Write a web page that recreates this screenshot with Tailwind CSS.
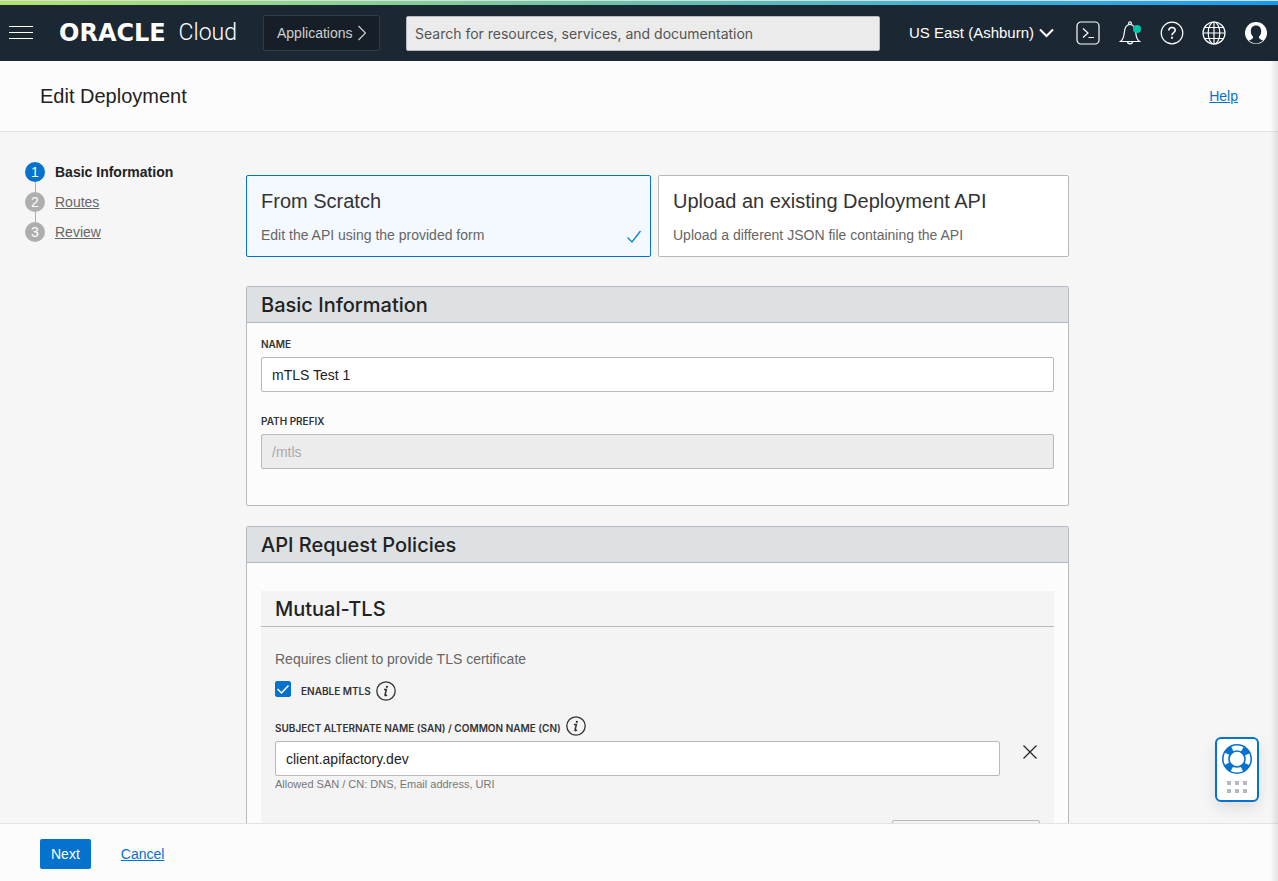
<!DOCTYPE html>
<html lang="en">
<head>
  <meta charset="UTF-8" />
  <meta name="viewport" content="width=device-width, initial-scale=1.0"/>
  <title>Edit Deployment</title>
  <script src="https://cdn.jsdelivr.net/npm/@tailwindcss/browser@4"></script>
</head>
<body class="relative flex flex-col h-screen overflow-hidden bg-[#f6f6f6] font-['Liberation_Sans',Arial,sans-serif] text-sm text-[#222]">

  <!-- Top bar -->
  <div class="h-[5px] shrink-0 border-t border-[#dcdcdc] bg-linear-to-r from-[#b0e566] via-[#66c2ac] to-[#0d9bf5]"></div>
  <header class="flex items-center h-14 shrink-0 pl-[9px] pr-[10px] bg-[#1b2733] text-white">
    <button type="button" aria-label="Menu" class="shrink-0">
      <svg class="block w-6 h-4" viewBox="0 0 24 16" stroke="#fff" fill="none"><path d="M0 1.5h24M0 7.5h24M0 13.5h24"/></svg>
    </button>
    <a href="#" class="flex items-center justify-between shrink-0 w-[178px] ml-[26px] leading-6">
      <span class="font-['DejaVu_Sans',sans-serif] text-2xl font-bold">ORACLE</span>
      <span class="font-['Roboto',sans-serif] text-[23px] font-light">Cloud</span>
    </a>
    <button type="button" class="flex items-center justify-between shrink-0 w-[117px] h-9 ml-[26px] px-[13px] border border-[#303d45] rounded-xs bg-[#161f27] text-[#d0d0d0]">
      Applications
      <svg class="w-2 h-4" viewBox="0 0 8 16" fill="none" stroke="currentColor" stroke-width="1.2"><path d="M.5 1 7.5 8l-7 7"/></svg>
    </button>
    <input type="search" aria-label="Search" placeholder="Search for resources, services, and documentation" class="flex-1 min-w-0 h-[35px] ml-[26px] px-2 border border-[#b4bac0] rounded-xs bg-[#ebebeb] font-['Inter',sans-serif] text-sm text-[#222] placeholder:text-[#555]"/>
    <button type="button" class="flex items-center justify-between shrink-0 w-[145px] ml-[29px] text-[15px]">
      US East (Ashburn)
      <svg class="w-[15px] h-[10px]" viewBox="0 0 15 10" fill="none" stroke="#fff" stroke-width="2"><path d="M1 1.5l6.5 6.5L14 1.5"/></svg>
    </button>
    <div class="flex items-center shrink-0 gap-[18px] ml-[22px]">
      <button type="button" aria-label="Cloud Shell">
        <svg class="block size-6" viewBox="0 0 24 24" fill="none" stroke="#fff" stroke-width="1.2"><rect x="1" y="1" width="22" height="22" rx="4"/><path d="M7 7.5l5 4.500-5 4.500M12.500 16.500h5.500"/></svg>
      </button>
      <button type="button" aria-label="Announcements">
        <svg class="block size-6" viewBox="0 0 24 24" fill="none" stroke="#fff" stroke-width="1.2">
          <path d="M2.500 20.500c2.500-1.800 3.300-4 3.700-8.500.4-5 1.800-8.500 5.800-8.500s5.400 3.500 5.800 8.500c.4 4.500 1.200 6.700 3.700 8.500z"/>
          <circle cx="12" cy="2.300" r="1.400"/><path d="M9.500 20.500c0 3.200 5 3.200 5 0"/>
          <circle cx="19" cy="8" r="4" fill="#00c7a5" stroke="none"/>
        </svg>
      </button>
      <button type="button" aria-label="Help">
        <svg class="block size-6" viewBox="0 0 24 24" fill="none" stroke="#fff" stroke-width="1.2"><circle cx="12" cy="12" r="10.800"/><path d="M8.800 9.500c0-4 6.400-4 6.400-.3 0 2.500-3.200 2.400-3.200 5" stroke-width="1.600"/><path d="M12 15.800v1.900" stroke-width="1.800"/></svg>
      </button>
      <button type="button" aria-label="Language">
        <svg class="block size-6" viewBox="0 0 24 24" fill="none" stroke="#fff" stroke-width="1.2"><circle cx="12" cy="12" r="11"/><ellipse cx="12" cy="12" rx="5.800" ry="11"/><path d="M12 1v22M1 12h22M3 6.500h18M3 17.500h18"/></svg>
      </button>
      <button type="button" aria-label="Profile">
        <svg class="block size-6" viewBox="0 0 24 24"><circle cx="12" cy="12" r="11" fill="#fff"/><path d="M12 4.500c-3.400 0-5.200 2.400-5.200 5.800 0 2.300 1 4.300 2.300 5.400.2 2-1.600 2.600-4.100 3.900 1.900 1.900 4.300 2.800 7 2.800s5.100-.9 7-2.800c-2.500-1.300-4.300-1.900-4.100-3.900 1.300-1.100 2.300-3.100 2.300-5.400 0-3.400-1.800-5.800-5.200-5.800z" fill="#1b2733"/></svg>
      </button>
    </div>
  </header>

  <!-- Page title -->
  <div class="flex items-center justify-between shrink-0 h-[71px] px-10 border-b border-[#e3e3e3] bg-[#fcfcfc]">
    <h1 class="text-xl">Edit Deployment</h1>
    <a href="#" class="text-[#0572ce] underline">Help</a>
  </div>

  <main class="flex-1 min-h-0 grid grid-cols-[246px_1fr_209px] overflow-y-auto [scrollbar-width:none]">

    <!-- Wizard steps -->
    <nav aria-label="Steps" class="pt-[30px] pl-[25px]">
      <ol>
        <li class="flex items-center gap-[10px]">
          <span class="flex items-center justify-center size-5 rounded-full bg-[#0572ce] text-white">1</span>
          <span class="font-bold">Basic Information</span>
        </li>
        <li class="w-px h-[10px] ml-[10px] bg-[#aeaeae]" aria-hidden="true"></li>
        <li class="flex items-center gap-[10px]">
          <span class="flex items-center justify-center size-5 rounded-full bg-[#aeaeae] text-white">2</span>
          <a href="#" class="text-[#666] underline">Routes</a>
        </li>
        <li class="w-px h-[10px] ml-[10px] bg-[#aeaeae]" aria-hidden="true"></li>
        <li class="flex items-center gap-[10px]">
          <span class="flex items-center justify-center size-5 rounded-full bg-[#aeaeae] text-white">3</span>
          <a href="#" class="text-[#666] underline">Review</a>
        </li>
      </ol>
    </nav>

    <form class="pt-[43px]">
      <div class="grid grid-cols-[405fr_411fr] gap-[7px]">
        <button type="button" class="flex items-end justify-between py-[11px] pl-[14px] pr-2 border border-[#0572ce] rounded-xs bg-[#f3f9fe] text-left">
          <span>
            <span class="block text-xl leading-7 text-[#333]">From Scratch</span>
            <span class="block mt-[10px] text-[#666]">Edit the API using the provided form</span>
          </span>
          <svg class="w-4 h-4" viewBox="0 0 16 16" fill="none" stroke="#0a84d0" stroke-width="1.3"><path d="M1.500 8.500l4.500 4.500L14.500 2"/></svg>
        </button>
        <button type="button" class="py-[11px] px-[14px] border border-[#b4bac0] rounded-xs bg-white text-left">
          <span class="block text-xl leading-7 text-[#333]">Upload an existing Deployment API</span>
          <span class="block mt-[10px] text-[#666]">Upload a different JSON file containing the API</span>
        </button>
      </div>

      <section class="mt-[29px] border border-[#b4bac0] rounded-xs bg-[#fcfcfc]">
        <h2 class="h-9 px-[14px] border-b border-[#b4bac0] bg-[#dde1e4] font-['Inter',sans-serif] text-xl leading-9 font-medium">Basic Information</h2>
        <div class="pt-[13px] px-[14px] pb-9">
          <label for="name" class="block font-['Inter',sans-serif] text-[10px] leading-4 font-semibold text-[#333]">NAME</label>
          <input id="name" type="text" value="mTLS Test 1" class="block w-full h-[35px] mt-[5px] px-[10px] border border-[#b4bac0] rounded-xs bg-white"/>
          <label for="prefix" class="block mt-[21px] font-['Inter',sans-serif] text-[10px] leading-4 font-semibold text-[#333]">PATH PREFIX</label>
          <input id="prefix" type="text" value="/mtls" disabled class="block w-full h-[35px] mt-[5px] px-[10px] border border-[#b4bac0] rounded-xs bg-[#ececec] text-[#aaa]"/>
        </div>
      </section>

      <section class="mt-5 border border-[#b4bac0] rounded-xs bg-[#fcfcfc]">
        <h2 class="h-9 px-[14px] border-b border-[#b4bac0] bg-[#dde1e4] font-['Inter',sans-serif] text-xl leading-9 font-medium">API Request Policies</h2>
        <div class="pt-7 px-[14px] pb-9">
          <div class="bg-[#f4f4f4]">
            <h3 class="h-9 px-[14px] border-b border-[#b4bac0] font-['Inter',sans-serif] text-xl leading-9 font-medium">Mutual-TLS</h3>
            <div class="pt-[22px] px-[14px] pb-5">
              <p class="text-[#666]">Requires client to provide TLS certificate</p>
              <div class="flex items-start mt-3">
                <input id="mtls" type="checkbox" checked class="peer appearance-none size-4 rounded-xs border border-[#8a9096] bg-white checked:border-[#0572ce] checked:bg-[#0572ce]"/>
                <svg class="hidden peer-checked:block pointer-events-none size-4 -ml-4" viewBox="0 0 16 16" fill="none" stroke="#fff" stroke-width="1.5"><path d="M2.500 8l4 4L13.500 4.500"/></svg>
                <label for="mtls" class="ml-[10px] font-['Inter',sans-serif] text-[10px] leading-5 font-semibold text-[#333]">ENABLE MTLS</label>
                <button type="button" aria-label="About mTLS" class="ml-[5px]">
                  <svg class="block size-5" viewBox="0 0 20 20" fill="none" stroke="#333" stroke-width="1.3"><circle cx="10" cy="10" r="9.200"/><path d="M8 8.500h2.400L9 14q-.1.800.7.600l1.400-.8" stroke-width="1.500"/><circle cx="10.900" cy="5.800" r="1.100" fill="#333" stroke="none"/></svg>
                </button>
              </div>
              <div class="flex items-end mt-[15px]">
                <label for="san" class="font-['Inter',sans-serif] text-[10px] leading-4 font-semibold text-[#333]">SUBJECT ALTERNATE NAME (SAN) / COMMON NAME (CN)</label>
                <button type="button" aria-label="About SAN and CN" class="ml-[5px]">
                  <svg class="block size-5" viewBox="0 0 20 20" fill="none" stroke="#333" stroke-width="1.3"><circle cx="10" cy="10" r="9.200"/><path d="M8 8.500h2.400L9 14q-.1.800.7.600l1.400-.8" stroke-width="1.500"/><circle cx="10.900" cy="5.800" r="1.100" fill="#333" stroke="none"/></svg>
                </button>
              </div>
              <div class="flex items-start mt-[5px]">
                <input id="san" type="text" value="client.apifactory.dev" class="flex-1 min-w-0 h-[35px] px-[10px] border border-[#b4bac0] rounded-xs bg-white"/>
                <button type="button" aria-label="Remove" class="flex justify-center w-5 ml-5 pt-1">
                  <svg class="block size-[14px]" viewBox="0 0 14 14" fill="none" stroke="#222" stroke-width="1.2"><path d="M.5.5l13 13M13.500.5l-13 13"/></svg>
                </button>
              </div>
              <p class="text-[11px] leading-4 text-[#777]">Allowed SAN / CN: DNS, Email address, URI</p>
              <div class="flex justify-end mt-7">
                <button type="button" aria-label="Add another" class="w-[148px] h-[30px] border border-[#b4bac0] rounded-xs"></button>
              </div>
            </div>
          </div>
        </div>
      </section>
    </form>
  </main>

  <footer class="flex items-center shrink-0 h-[58px] pt-[3px] px-10 border-t border-[#e3e3e3] bg-[#fcfcfc]">
    <button type="button" class="h-[30px] px-[11px] rounded-xs bg-[#0572ce] text-white">Next</button>
    <a href="#" class="ml-[30px] text-[#0572ce] underline">Cancel</a>
  </footer>

  <!-- Floating support widget -->
  <button type="button" aria-label="Support" class="absolute right-[19px] bottom-[79px] flex flex-col items-center w-11 h-[65px] pt-[5px] border-2 border-[#0572ce] rounded-md bg-white shadow-[0_6px_16px_rgba(0,0,0,0.1)]">
    <svg class="block size-[30px]" viewBox="0 0 30 30" fill="none" stroke="#0572ce">
      <circle cx="15" cy="15" r="11" stroke-width="7" stroke-dasharray="7 10.279" stroke-dashoffset="-5.140"/>
      <circle cx="15" cy="15" r="14.200" stroke-width="1.600"/><circle cx="15" cy="15" r="8" stroke-width="1.600"/>
    </svg>
    <svg class="block w-5 h-3 mt-[7px]" viewBox="0 0 20 12" fill="#b4bac0"><path d="M0 0h4v4H0zM8 0h4v4H8zM16 0h4v4h-4zM0 8h4v4H0zM8 8h4v4H8zM16 8h4v4h-4z"/></svg>
  </button>

  <div class="absolute right-0 top-[61px] bottom-0 w-2 bg-linear-to-l from-black/10 to-transparent pointer-events-none"></div>

</body>
</html>
